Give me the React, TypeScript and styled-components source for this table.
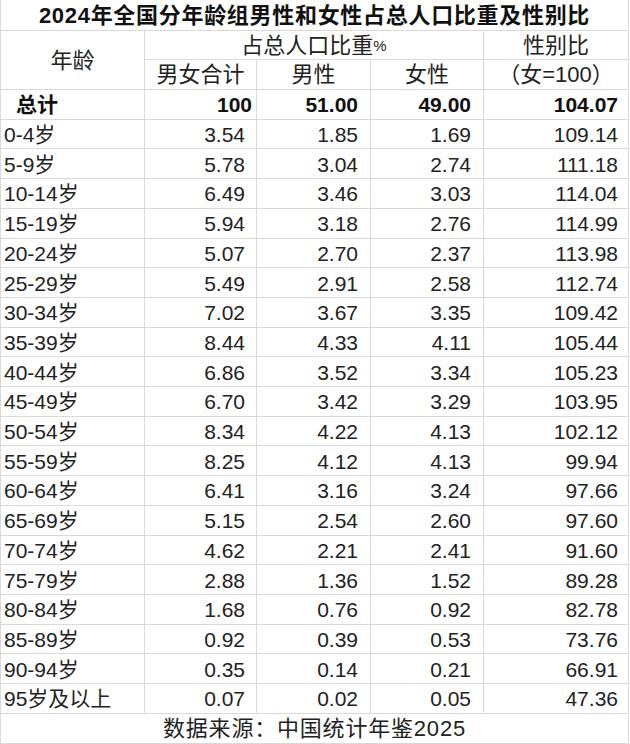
import React from "react"
import styled, { createGlobalStyle } from "styled-components"

const GlobalStyle = createGlobalStyle`
  html, body {
    margin: 0;
    padding: 0;
    background: #ffffff;
  }
  body {
    font-family: "Liberation Sans", "Noto Sans CJK SC", sans-serif;
  }
`

const lineColor = "#d9d9d9"

// data rows: age group, total, male, female, sex ratio
const rows: string[][] = [
  ["0-4岁", "3.54", "1.85", "1.69", "109.14"],
  ["5-9岁", "5.78", "3.04", "2.74", "111.18"],
  ["10-14岁", "6.49", "3.46", "3.03", "114.04"],
  ["15-19岁", "5.94", "3.18", "2.76", "114.99"],
  ["20-24岁", "5.07", "2.70", "2.37", "113.98"],
  ["25-29岁", "5.49", "2.91", "2.58", "112.74"],
  ["30-34岁", "7.02", "3.67", "3.35", "109.42"],
  ["35-39岁", "8.44", "4.33", "4.11", "105.44"],
  ["40-44岁", "6.86", "3.52", "3.34", "105.23"],
  ["45-49岁", "6.70", "3.42", "3.29", "103.95"],
  ["50-54岁", "8.34", "4.22", "4.13", "102.12"],
  ["55-59岁", "8.25", "4.12", "4.13", "99.94"],
  ["60-64岁", "6.41", "3.16", "3.24", "97.66"],
  ["65-69岁", "5.15", "2.54", "2.60", "97.60"],
  ["70-74岁", "4.62", "2.21", "2.41", "91.60"],
  ["75-79岁", "2.88", "1.36", "1.52", "89.28"],
  ["80-84岁", "1.68", "0.76", "0.92", "82.78"],
  ["85-89岁", "0.92", "0.39", "0.53", "73.76"],
  ["90-94岁", "0.35", "0.14", "0.21", "66.91"],
  ["95岁及以上", "0.07", "0.02", "0.05", "47.36"],
]

// right indent of each number column
const numPad = [11, 12, 12, 10]

const Sheet = styled.div`
  display: grid;
  width: 627px;
  grid-template-columns: 143px 111px 113px 112px 144px;
  grid-template-rows: 30px 28px 29px repeat(21, 28.714px) 29px;
  gap: 1px;
  background: ${lineColor};
  border-left: 1px solid ${lineColor};
  border-right: 1px solid ${lineColor};
  border-bottom: 1px solid ${lineColor};
  color: #222;
  font-size: 21px;
`

const Cell = styled.div`
  background: #ffffff;
  display: flex;
  align-items: center;
  white-space: nowrap;
  overflow: hidden;
  line-height: 1;
  padding-top: 1px;
`

const Title = styled(Cell)`
  grid-column: 1 / span 5;
  justify-content: center;
  font-weight: bold;
  font-size: 22px;
  color: #111;
  letter-spacing: 0.7px;
`

const HeadCell = styled(Cell)<{ $cols?: number; $rows?: number }>`
  justify-content: center;
  grid-column: span ${(p) => p.$cols || 1};
  grid-row: span ${(p) => p.$rows || 1};
  font-size: 22px;
`

const Percent = styled.span`
  font-size: 15px;
`

const AgeCell = styled(Cell)<{ $indent?: number; $bold?: boolean }>`
  padding-left: ${(p) => p.$indent ?? 3}px;
  font-weight: ${(p) => (p.$bold ? "bold" : "normal")};
  font-size: 21px;
  color: ${(p) => (p.$bold ? "#111" : "inherit")};
`

const NumCell = styled(Cell)<{ $pad: number; $bold?: boolean }>`
  justify-content: flex-end;
  padding-right: ${(p) => p.$pad}px;
  font-weight: ${(p) => (p.$bold ? "bold" : "normal")};
  color: ${(p) => (p.$bold ? "#111" : "inherit")};
`

const Footer = styled(Cell)`
  grid-column: 1 / span 5;
  justify-content: center;
  font-size: 22px;
  letter-spacing: 0.8px;
`

const App = () => {
  return (
    <>
      <GlobalStyle />
      <Sheet>
        <Title>2024年全国分年龄组男性和女性占总人口比重及性别比</Title>

        <HeadCell $rows={2}>年龄</HeadCell>
        <HeadCell $cols={3}>
          占总人口比重<Percent>%</Percent>
        </HeadCell>
        <HeadCell>性别比</HeadCell>
        <HeadCell>男女合计</HeadCell>
        <HeadCell>男性</HeadCell>
        <HeadCell>女性</HeadCell>
        <HeadCell>（女=100）</HeadCell>

        <AgeCell $indent={15} $bold>总计</AgeCell>
        <NumCell $pad={4} $bold>100</NumCell>
        <NumCell $pad={numPad[1]} $bold>51.00</NumCell>
        <NumCell $pad={numPad[2]} $bold>49.00</NumCell>
        <NumCell $pad={numPad[3]} $bold>104.07</NumCell>

        {rows.map((r) => (
          <React.Fragment key={r[0]}>
            <AgeCell>{r[0]}</AgeCell>
            {r.slice(1).map((v, i) => (
              <NumCell key={i} $pad={numPad[i]}>{v}</NumCell>
            ))}
          </React.Fragment>
        ))}

        <Footer>数据来源：中国统计年鉴2025</Footer>
      </Sheet>
    </>
  )
}

export default App
